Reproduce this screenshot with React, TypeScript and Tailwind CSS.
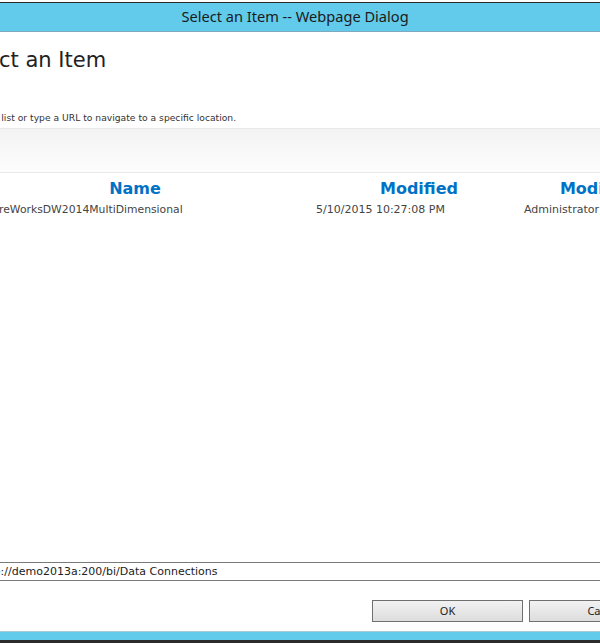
export default function App() {
  return (
    <div className="w-[600px] h-[643px] bg-white flex flex-col overflow-hidden font-['DejaVu_Sans',sans-serif]">
      {/* window frame top */}
      <div className="h-[2px] bg-white" />
      <div className="h-px bg-[#2b2b2b]" />
      <div className="h-[29px] bg-[#62caea] border-b border-[#7fa9bc] flex items-center justify-center pr-[10px] font-['Noto_Sans',sans-serif] text-[14.6px] text-[#1b1b1b]">
        Select an Item -- Webpage Dialog
      </div>

      {/* dialog body, scrolled so its left part is out of view */}
      <div className="flex-1 flex flex-col -ml-[46px] w-[780px]">
        <h1 className="mt-[16px] h-[24px] leading-[24px] text-[21px] font-normal text-[#222]">
          Select an Item
        </h1>
        <p className="mt-[40px] h-[12px] leading-[12px] text-[9.2px] text-[#333] pl-[5px]">
          from the list or type a URL to navigate to a specific location.
        </p>

        {/* toolbar */}
        <div className="mt-[4px] h-[45px] border-t border-b border-[#e9e9e9] bg-gradient-to-b from-[#f3f3f3] to-[#fdfdfd]" />

        {/* list */}
        <div className="grid grid-cols-[362px_206px_182px] mt-[6px]">
          <div className="text-center text-[16px] font-bold text-[#0072c6] leading-[20px]">Name</div>
          <div className="text-center text-[16px] font-bold text-[#0072c6] leading-[20px]">Modified</div>
          <div className="text-center text-[16px] font-bold text-[#0072c6] leading-[20px]">Modified By</div>
          <div className="pt-[3px] text-[10.8px] text-[#444] leading-[16px]">AdventureWorksDW2014MultiDimensional</div>
          <div className="pt-[3px] text-[11px] text-[#444] leading-[16px]">5/10/2015 10:27:08 PM</div>
          <div className="pt-[3px] text-[11px] text-[#444] leading-[16px] pl-[2px]">Administrator</div>
        </div>

        <div className="flex-1" />

        {/* url box */}
        <div className="h-[19px] border border-[#7a7a7a] flex items-center pt-[2px] pl-[23px] text-[11px] text-[#222] w-[700px]">
          http://demo2013a:200/bi/Data Connections
        </div>

        {/* buttons */}
        <div className="mt-[19px] mb-[9px] flex gap-[6px] pl-[418px] font-['Noto_Sans',sans-serif] text-[11px] text-[#222]">
          <button className="w-[151px] h-[22px] border border-[#707070] bg-gradient-to-b from-[#f2f2f2] to-[#dddddd]">
            OK
          </button>
          <button className="w-[151px] h-[22px] border border-[#707070] bg-gradient-to-b from-[#f2f2f2] to-[#dddddd]">
            Cancel
          </button>
        </div>
      </div>

      {/* window frame bottom */}
      <div className="h-px bg-[#a9c9d6]" />
      <div className="h-[8px] bg-[#62caea]" />
      <div className="h-[3px] bg-[#2b2b2b]" />
    </div>
  );
}
